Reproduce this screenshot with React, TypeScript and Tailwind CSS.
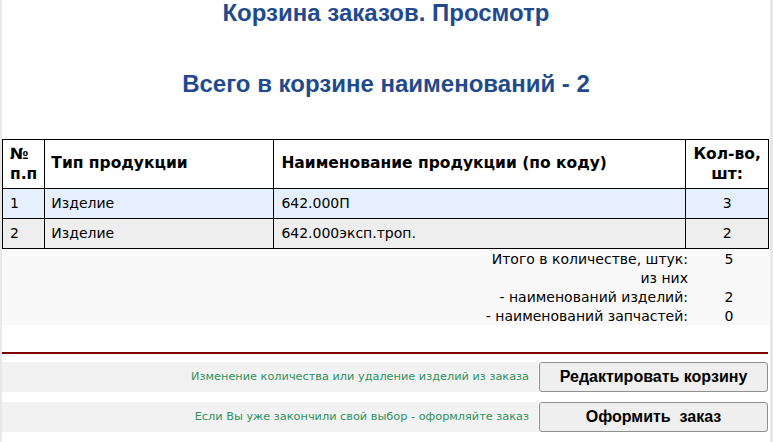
import React from 'react';

const rows = [
  { n: 1, type: 'Изделие', name: '642.000П', qty: 3 },
  { n: 2, type: 'Изделие', name: '642.000эксп.троп.', qty: 2 },
];

const summary: [string, string][] = [
  ['Итого в количестве, штук:', '5'],
  ['из них', ''],
  ['- наименований изделий:', '2'],
  ['- наименований запчастей:', '0'],
];

function ActionRow({ hint, label }: { hint: string; label: string }) {
  return (
    <div className="flex h-[30px] pr-[2px]">
      <div className="flex-1 bg-[#f2f2f2] flex items-center justify-end pr-[9px] text-[11.3px] text-[#2e9160] font-['DejaVu_Sans',sans-serif]">
        {hint}
      </div>
      <button className="ml-[1px] w-[229px] h-[30px] bg-[#efefef] border border-[#8f8f8f] rounded-[3px] text-[16px] font-bold text-black whitespace-pre font-['Liberation_Sans',Arial,sans-serif]">
        {label}
      </button>
    </div>
  );
}

export default function App() {
  return (
    <div className="min-h-[442px] bg-white border-l-2 border-r-[3px] border-[#e8e8e8]">
      <h1 className="text-center text-[24px] leading-[26px] font-bold text-[#1f4b8e] font-['Liberation_Sans',Arial,sans-serif]">
        Корзина заказов. Просмотр
      </h1>
      <h2 className="mt-[45px] text-center text-[24px] leading-[26px] font-bold text-[#1f4b8e] font-['Liberation_Sans',Arial,sans-serif]">
        Всего в корзине наименований - 2
      </h2>

      <table className="mt-[42px] w-[767px] border-collapse text-[14px] text-black font-['DejaVu_Sans',sans-serif]">
        <colgroup>
          <col className="w-[40px]" />
          <col className="w-[230px]" />
          <col className="w-[414px]" />
          <col className="w-[83px]" />
        </colgroup>
        <thead>
          <tr className="h-[49px] bg-white text-[15.5px]">
            <th className="border border-black text-left font-bold px-[7px] leading-[20px]">
              №<br />п.п
            </th>
            <th className="border border-black text-left font-bold px-[6px]">Тип продукции</th>
            <th className="border border-black text-left font-bold px-[7px]">Наименование продукции (по коду)</th>
            <th className="border border-black text-center font-bold px-[2px] leading-[20px]">
              Кол-во,<br />шт:
            </th>
          </tr>
        </thead>
        <tbody>
          {rows.map((r, i) => (
            <tr key={r.n} className={`h-[30px] ${i === 0 ? 'bg-[#e6f0fc]' : 'bg-[#eeeeee]'}`}>
              <td className="border border-black px-[7px]">{r.n}</td>
              <td className="border border-black px-[6px]">{r.type}</td>
              <td className="border border-black px-[7px]">{r.name}</td>
              <td className="border border-black text-center">{r.qty}</td>
            </tr>
          ))}
        </tbody>
      </table>

      <div className="pt-[1px] h-[76px] bg-[#f9f9f9] text-[14px] leading-[19px] text-black font-['DejaVu_Sans',sans-serif]">
        {summary.map(([label, value]) => (
          <div key={label} className="flex">
            <div className="w-[686px] text-right">{label}</div>
            <div className="w-[82px] text-center">{value}</div>
          </div>
        ))}
      </div>

      <div className="mt-[27px] mr-[2px] h-[2px] bg-[#800000]" />

      <div className="mt-[8px] flex flex-col gap-[10px]">
        <ActionRow hint="Изменение количества или удаление изделий из заказа" label="Редактировать корзину" />
        <ActionRow hint="Если Вы уже закончили свой выбор - оформляйте заказ" label="Оформить  заказ" />
      </div>
    </div>
  );
}
